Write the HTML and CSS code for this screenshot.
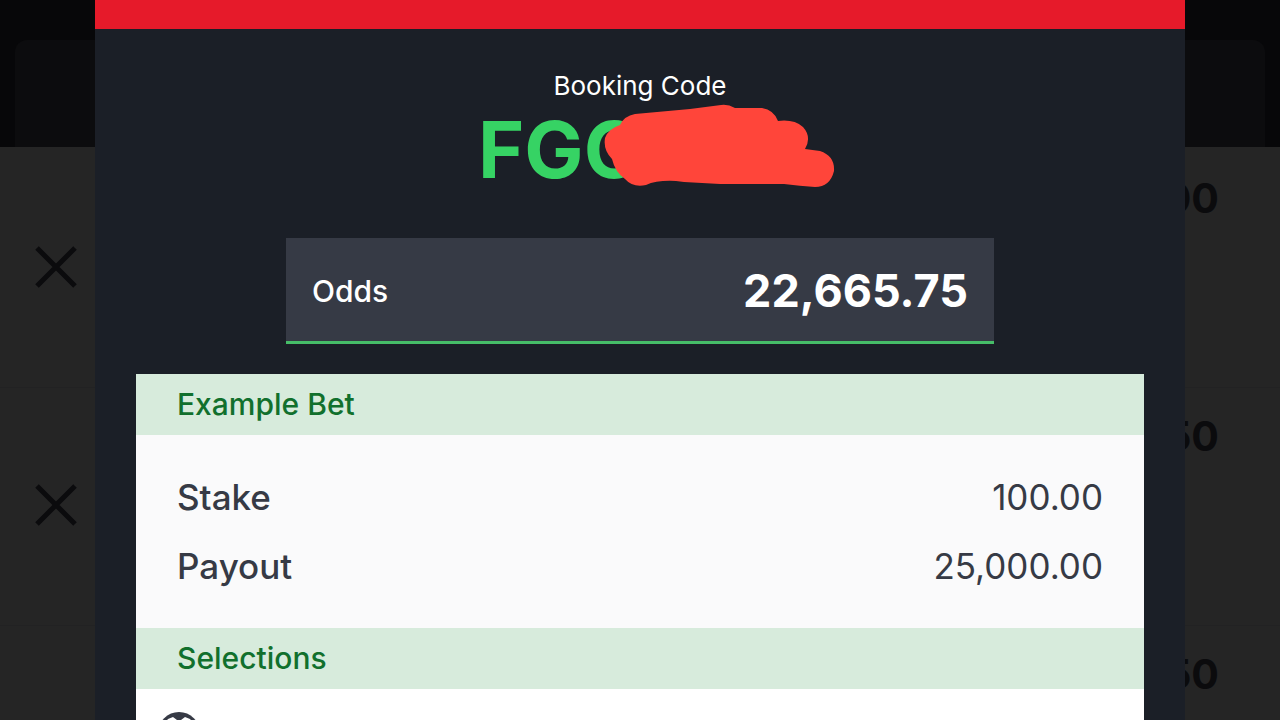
FILE: index.html
```html
<!DOCTYPE html>
<html lang="en">
<head>
<meta charset="utf-8">
<meta name="viewport" content="width=device-width, initial-scale=1">
<title>Booking Code</title>
<link rel="stylesheet" href="styles.css">
</head>
<body>
<div class="app">
  <div class="betslip">
    <div class="betslip-header"><div class="betslip-tab"></div></div>
    <ul class="bets">
      <li class="bet">
        <button class="remove" type="button" aria-label="Remove selection"><svg viewBox="0 0 42 42"><path d="M2 2L40 40M40 2L2 40"/></svg></button>
        <span class="bet-odds">.00</span>
      </li>
      <li class="bet">
        <button class="remove" type="button" aria-label="Remove selection"><svg viewBox="0 0 42 42"><path d="M2 2L40 40M40 2L2 40"/></svg></button>
        <span class="bet-odds">.50</span>
      </li>
      <li class="bet">
        <button class="remove" type="button" aria-label="Remove selection"><svg viewBox="0 0 42 42"><path d="M2 2L40 40M40 2L2 40"/></svg></button>
        <span class="bet-odds">.50</span>
      </li>
    </ul>
  </div>

  <main class="dialog" role="dialog" aria-label="Booking Code">
    <div class="accent"></div>
    <div class="dialog-body">
      <p class="code-label">Booking Code</p>
      <div class="code">FGC
        <svg class="scribble" viewBox="0 0 232 86" aria-hidden="true"><path d="M31 10L86 5L117 1Q124 0 131 4L158 4Q170 6 174 17Q190 15 199 23Q208 33 201 45L216 47Q231 52 230 67Q226 83 211 83Q196 82 180 80L116 80L80 78L72 77Q53 76 42 81Q29 84 21 75Q11 68 8 55Q-1 46 1 34Q4 25 16 21Q20 12 31 10Z"/></svg>
      </div>
      <section class="odds">
        <span class="odds-label">Odds</span>
        <strong class="odds-value">22,665.75</strong>
      </section>
      <div class="sheet">
        <h2 class="band">Example Bet</h2>
        <dl class="example">
          <div class="line"><dt>Stake</dt><dd>100.00</dd></div>
          <div class="line"><dt>Payout</dt><dd>25,000.00</dd></div>
        </dl>
        <h2 class="band">Selections</h2>
        <div class="selection">
          <svg class="ball" viewBox="0 0 42 42" aria-hidden="true"><circle cx="21" cy="21" r="21"/><path d="M6 12L10 7L15 5L19 8L19 13L10 20L5 17ZM36 12L32 7L27 5L23 8L23 13L32 20L37 17Z"/></svg>
        </div>
      </div>
    </div>
  </main>
</div>
</body>
</html>
```
FILE: styles.css
```css
* {
  box-sizing: border-box;
}

body {
  margin: 0;
  font-family: Inter, "Liberation Sans", sans-serif;
  background: #252525;
}

.app {
  display: grid;
  height: 100vh;
  overflow: hidden;
}

.betslip,
.dialog {
  grid-area: 1 / 1;
  min-height: 0;
}

.betslip {
  color: #0b0b0d;
}

.betslip-header {
  padding: 40px 15px 0;
  background: #070709;
}

.betslip-tab {
  height: 107px;
  border-radius: 12px 12px 0 0;
  background: #0c0c0e;
}

.bets {
  margin: 0;
  padding: 3px 0 0;
  list-style: none;
}

.bet {
  display: flex;
  justify-content: space-between;
  align-items: flex-start;
  height: 238px;
  padding: 24px 61px 0 35px;
  border-bottom: 1px solid #222223;
}

.remove {
  margin: 72px 0 0;
  padding: 0;
  border: 0;
  background: none;
}

.remove svg {
  display: block;
  width: 42px;
  height: 42px;
  fill: none;
  stroke: #0b0b0d;
  stroke-width: 5;
}

.bet-odds {
  font-size: 41px;
  line-height: 48px;
  font-weight: 700;
}

.dialog {
  z-index: 1;
  margin: 0 95px;
  background: #1b1f27;
}

.accent {
  height: 29px;
  background: #e61a2a;
}

.dialog-body {
  display: flex;
  flex-direction: column;
  align-items: center;
  padding: 41px 41px 0;
}

.code-label {
  margin: 0;
  color: #fff;
  font-size: 26px;
  line-height: 32px;
}

.code {
  position: relative;
  width: 324px;
  height: 96px;
  color: #36d364;
  font-size: 79px;
  line-height: 94px;
  font-weight: 700;
}

.scribble {
  position: absolute;
  left: 126px;
  top: 2px;
  width: 232px;
  height: 86px;
  fill: #ff453a;
}

.odds {
  display: flex;
  justify-content: space-between;
  align-items: center;
  width: 708px;
  max-width: 100%;
  margin: 40px 0 30px;
  padding: 2px 26px 0;
  background: #363a45;
  border-bottom: 3px solid #46bd68;
  color: #fff;
}

.odds-label {
  font-size: 30px;
  font-weight: 500;
}

.odds-value {
  font-size: 45px;
  line-height: 101px;
  font-weight: 700;
}

.sheet {
  align-self: stretch;
  background: #fff;
}

.band {
  margin: 0;
  padding: 0 41px;
  background: #d7ebdc;
  color: #11702d;
  font-size: 30px;
  line-height: 61px;
  font-weight: 500;
}

.example {
  margin: 0;
  padding: 28px 41px 27px;
  background: #fafafb;
  color: #363a45;
  font-size: 35px;
}

.line {
  display: flex;
  justify-content: space-between;
  line-height: 69px;
}

.line dt {
  font-weight: 500;
}

.line dd {
  margin: 0;
}

.selection {
  padding: 23px 22px;
}

.ball {
  display: block;
  width: 42px;
  height: 42px;
  fill: #363a45;
}

.ball path {
  fill: #fff;
}
```
